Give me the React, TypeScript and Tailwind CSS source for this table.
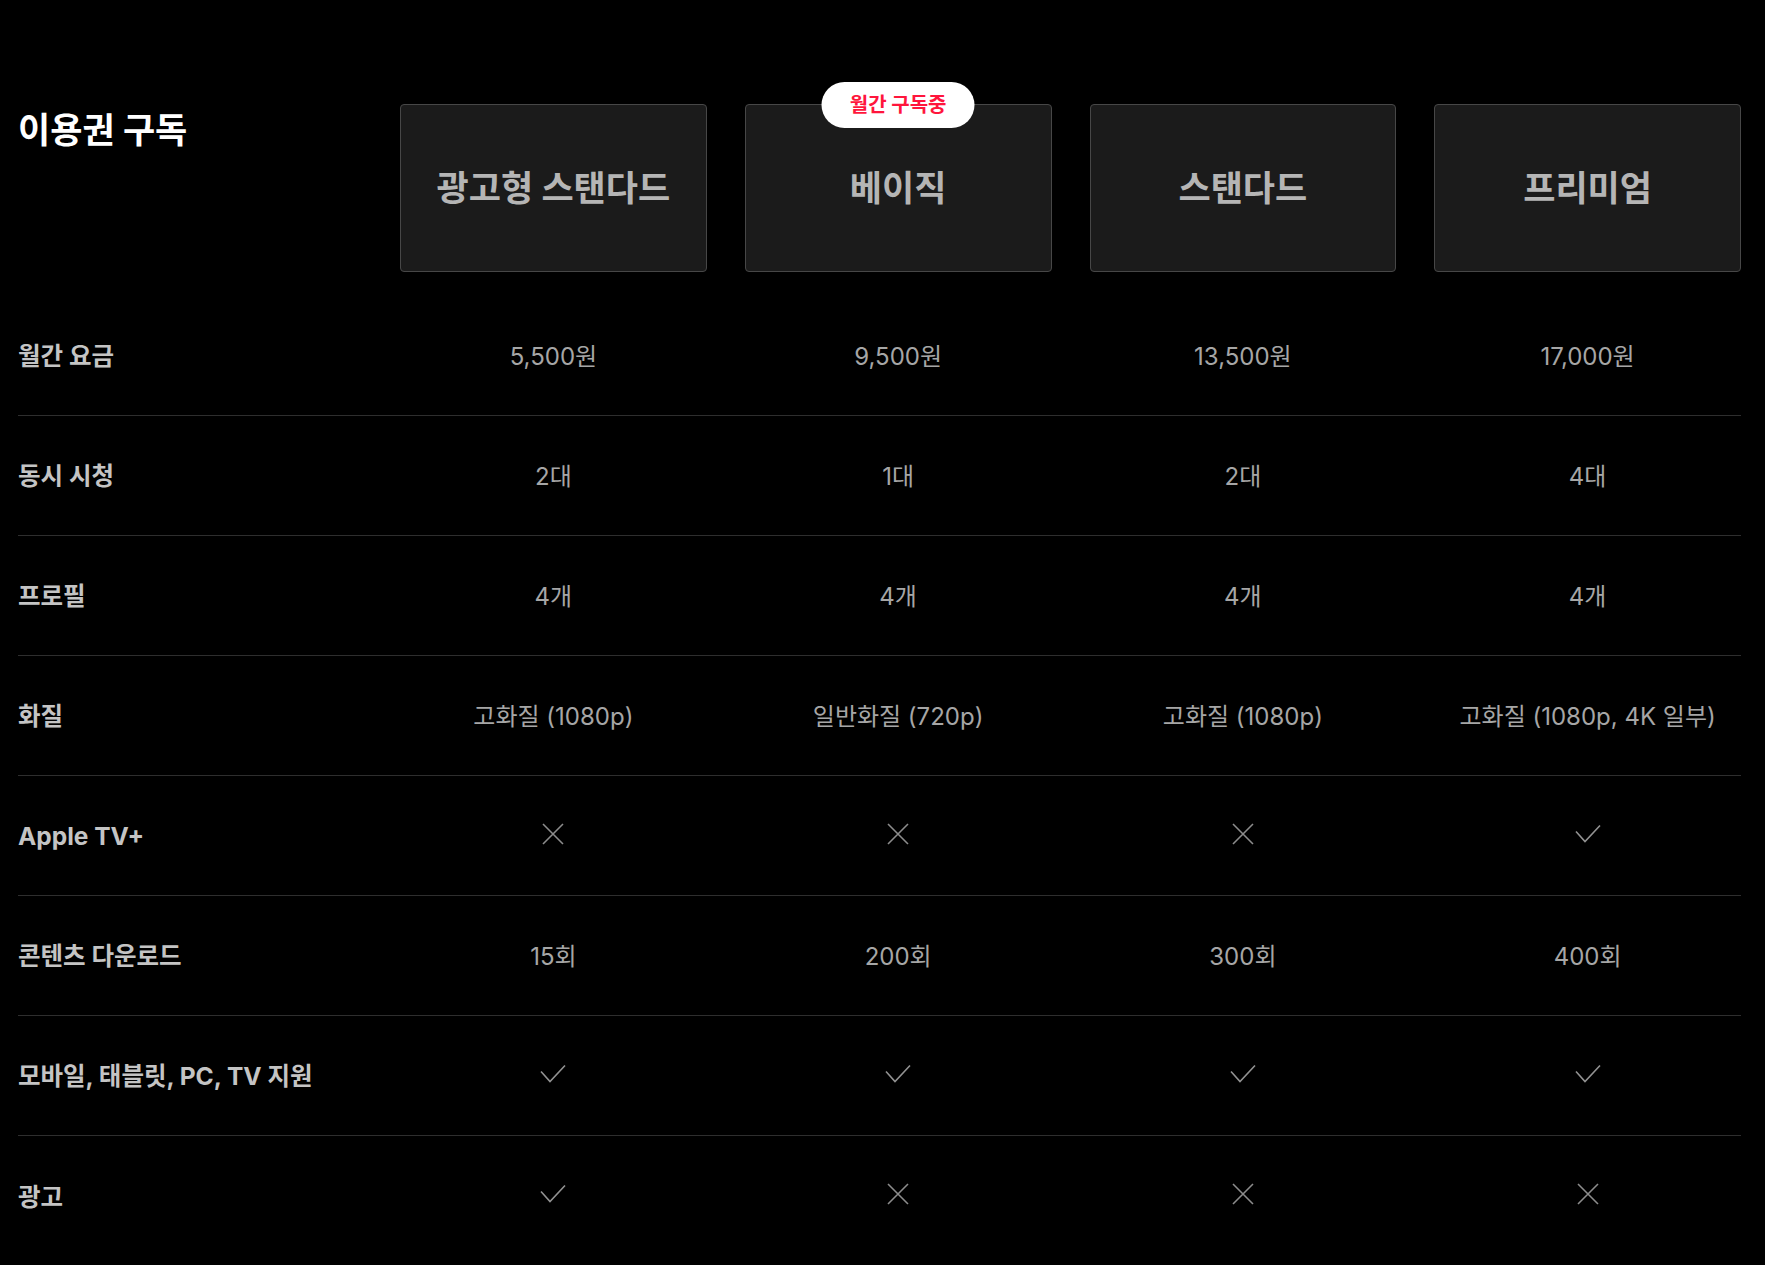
import React from 'react';

type Cell = string | boolean;

const plans = [
  { name: '광고형 스탠다드' },
  { name: '베이직', current: true },
  { name: '스탠다드' },
  { name: '프리미엄' },
];

const rows: { label: string; values: Cell[] }[] = [
  { label: '월간 요금', values: ['5,500원', '9,500원', '13,500원', '17,000원'] },
  { label: '동시 시청', values: ['2대', '1대', '2대', '4대'] },
  { label: '프로필', values: ['4개', '4개', '4개', '4개'] },
  { label: '화질', values: ['고화질 (1080p)', '일반화질 (720p)', '고화질 (1080p)', '고화질 (1080p, 4K 일부)'] },
  { label: 'Apple TV+', values: [false, false, false, true] },
  { label: '콘텐츠 다운로드', values: ['15회', '200회', '300회', '400회'] },
  { label: '모바일, 태블릿, PC, TV 지원', values: [true, true, true, true] },
  { label: '광고', values: [true, false, false, false] },
];

const font = { fontFamily: 'Inter, "Noto Sans CJK KR", "Noto Sans", sans-serif' };

function CheckIcon() {
  return (
    <svg className="-mt-[6px]" width="26" height="24" viewBox="0 0 26 24" fill="none" stroke="#929292" strokeWidth={1.6}>
      <path d="M1 9.5 L10 19.5 L25 3.5" />
    </svg>
  );
}

function CrossIcon() {
  return (
    <svg className="-mt-[6px]" width="24" height="24" viewBox="0 0 24 24" fill="none" stroke="#8c8c8c" strokeWidth={1.6}>
      <path d="M2 2 L22 22 M22 2 L2 22" />
    </svg>
  );
}

export default function App() {
  return (
    <div className="min-h-screen bg-black pl-[18px] pr-[24px] pt-[104px]" style={font}>
      {/* Header */}
      <div className="grid grid-cols-[344px_repeat(4,minmax(0,1fr))] gap-x-[38px]">
        <h1 className="text-[35px] font-bold leading-[52px] text-white">이용권 구독</h1>
        {plans.map((plan) => (
          <div
            key={plan.name}
            className="relative flex h-[168px] items-center justify-center rounded-[4px] border border-[#474747] bg-[#1b1b1b]"
          >
            {plan.current && (
              <span className="absolute left-1/2 top-0 flex h-[46px] w-[153px] -translate-x-1/2 -translate-y-1/2 items-center justify-center rounded-full bg-white text-[20px] font-bold text-[#ff153c]">
                월간 구독중
              </span>
            )}
            <span className="text-[35px] font-bold text-[#b5b5b5]">{plan.name}</span>
          </div>
        ))}
      </div>

      {/* Rows */}
      <div className="mt-[24px]">
        {rows.map((row, i) => (
          <div
            key={row.label}
            className={
              'grid h-[120px] grid-cols-[344px_repeat(4,minmax(0,1fr))] items-center gap-x-[38px] pt-[2px] ' +
              (i < rows.length - 1 ? 'border-b border-[#2e2e2e]' : '')
            }
          >
            <div className="text-[24.5px] font-bold text-[#c4c4c4]">{row.label}</div>
            {row.values.map((v, j) => (
              <div key={j} className="flex items-center justify-center text-[24px] text-[#a6a6a6]">
                {typeof v === 'string' ? v : v ? <CheckIcon /> : <CrossIcon />}
              </div>
            ))}
          </div>
        ))}
      </div>
    </div>
  );
}
